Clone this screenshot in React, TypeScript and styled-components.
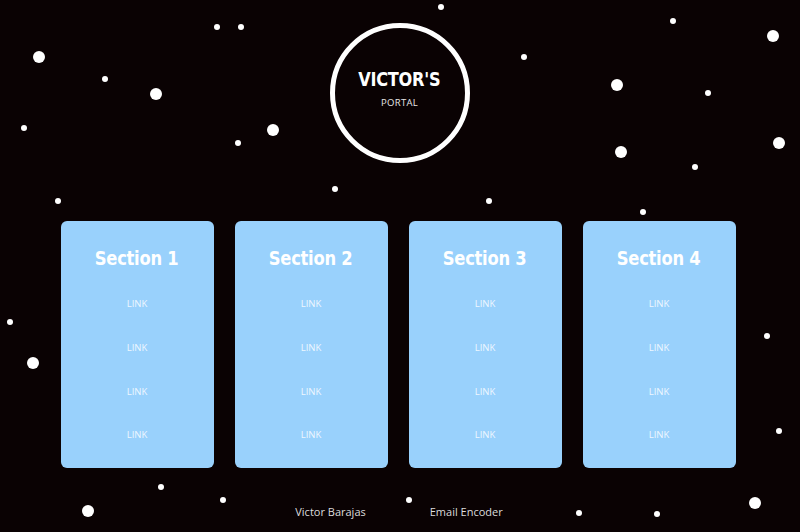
import React from "react";
import styled, { createGlobalStyle } from "styled-components";

const GlobalStyle = createGlobalStyle`
  html, body { margin: 0; padding: 0; background: #0a0203; }
  body { width: 800px; height: 532px; overflow: hidden; }
  #root { width: 800px; height: 532px; }
`;

const Page = styled.div`
  position: relative;
  width: 800px;
  height: 532px;
  background: #0a0203;
  overflow: hidden;
  display: flex;
  flex-direction: column;
  align-items: center;
  font-family: "Open Sans", sans-serif;
`;

const Star = styled.span<{ $size: number }>`
  position: absolute;
  width: ${(p) => p.$size}px;
  height: ${(p) => p.$size}px;
  margin-left: ${(p) => -p.$size / 2}px;
  margin-top: ${(p) => -p.$size / 2}px;
  border-radius: 50%;
  background: #ffffff;
`;

const Logo = styled.div`
  position: relative;
  z-index: 1;
  margin-top: 23px;
  margin-right: 1px;
  width: 140px;
  height: 140px;
  box-sizing: border-box;
  border: 5px solid #ffffff;
  border-radius: 50%;
  display: flex;
  flex-direction: column;
  align-items: center;
  justify-content: center;
  padding-bottom: 9px;
`;

const LogoTitle = styled.div`
  font-family: "DejaVu Sans", sans-serif;
  font-weight: 700;
  font-size: 19px;
  line-height: 20px;
  color: #ffffff;
  letter-spacing: -0.3px;
  transform: scaleX(0.85);
`;

const LogoSub = styled.div`
  margin-top: 8px;
  font-family: "Open Sans", sans-serif;
  font-size: 9.5px;
  line-height: 12px;
  color: #e6e6e6;
  letter-spacing: 0.3px;
`;

const Cards = styled.div`
  position: relative;
  z-index: 1;
  margin-top: 58px;
  margin-right: 4px;
  display: flex;
  gap: 21px;
`;

const Card = styled.div`
  width: 153px;
  height: 247px;
  box-sizing: border-box;
  border-radius: 6px;
  background: #99d1fc;
  display: flex;
  flex-direction: column;
  align-items: center;
  padding-top: 26px;
`;

const CardTitle = styled.div`
  font-family: "DejaVu Sans", sans-serif;
  font-weight: 700;
  font-size: 19px;
  line-height: 22px;
  color: #ffffff;
  letter-spacing: -0.3px;
  transform: scaleX(0.86);
  margin-bottom: 24px;
`;

const LinkItem = styled.a`
  display: block;
  height: 44px;
  line-height: 22px;
  font-family: "Open Sans", sans-serif;
  font-size: 9.5px;
  color: #eef7ff;
  text-decoration: none;
`;

const Footer = styled.div`
  position: relative;
  z-index: 1;
  margin-top: 37px;
  display: flex;
  gap: 64px;
  padding-right: 2px;
`;

const FooterLink = styled.a`
  font-family: "Open Sans", sans-serif;
  font-size: 11px;
  line-height: 14px;
  color: #dcdcdc;
  text-decoration: none;
`;

const stars: [number, number, number][] = [
  [217, 27, 6], [241, 27, 6], [39, 57, 12], [105, 79, 6], [156, 94, 12],
  [24, 128, 6], [273, 130, 12], [238, 143, 6], [58, 201, 6], [335, 189, 6],
  [441, 7, 6], [673, 21, 6], [773, 36, 12], [524, 57, 6], [617, 85, 12],
  [708, 93, 6], [621, 152, 12], [779, 143, 12], [695, 167, 6], [489, 201, 6],
  [643, 212, 6], [10, 322, 6], [33, 363, 12], [161, 487, 6], [223, 500, 6],
  [88, 511, 12], [767, 336, 6], [779, 431, 6], [409, 500, 6], [579, 513, 6],
  [657, 514, 6], [755, 503, 12],
];

const sections = ["Section 1", "Section 2", "Section 3", "Section 4"];

export default function App() {
  return (
    <>
      <GlobalStyle />
      <Page>
        {stars.map(([x, y, s], i) => (
          <Star key={i} $size={s} style={{ left: x, top: y }} />
        ))}
        <Logo>
          <LogoTitle>VICTOR'S</LogoTitle>
          <LogoSub>PORTAL</LogoSub>
        </Logo>
        <Cards>
          {sections.map((t) => (
            <Card key={t}>
              <CardTitle>{t}</CardTitle>
              {[0, 1, 2, 3].map((i) => (
                <LinkItem key={i} href="#">LINK</LinkItem>
              ))}
            </Card>
          ))}
        </Cards>
        <Footer>
          <FooterLink href="#">Victor Barajas</FooterLink>
          <FooterLink href="#">Email Encoder</FooterLink>
        </Footer>
      </Page>
    </>
  );
}
